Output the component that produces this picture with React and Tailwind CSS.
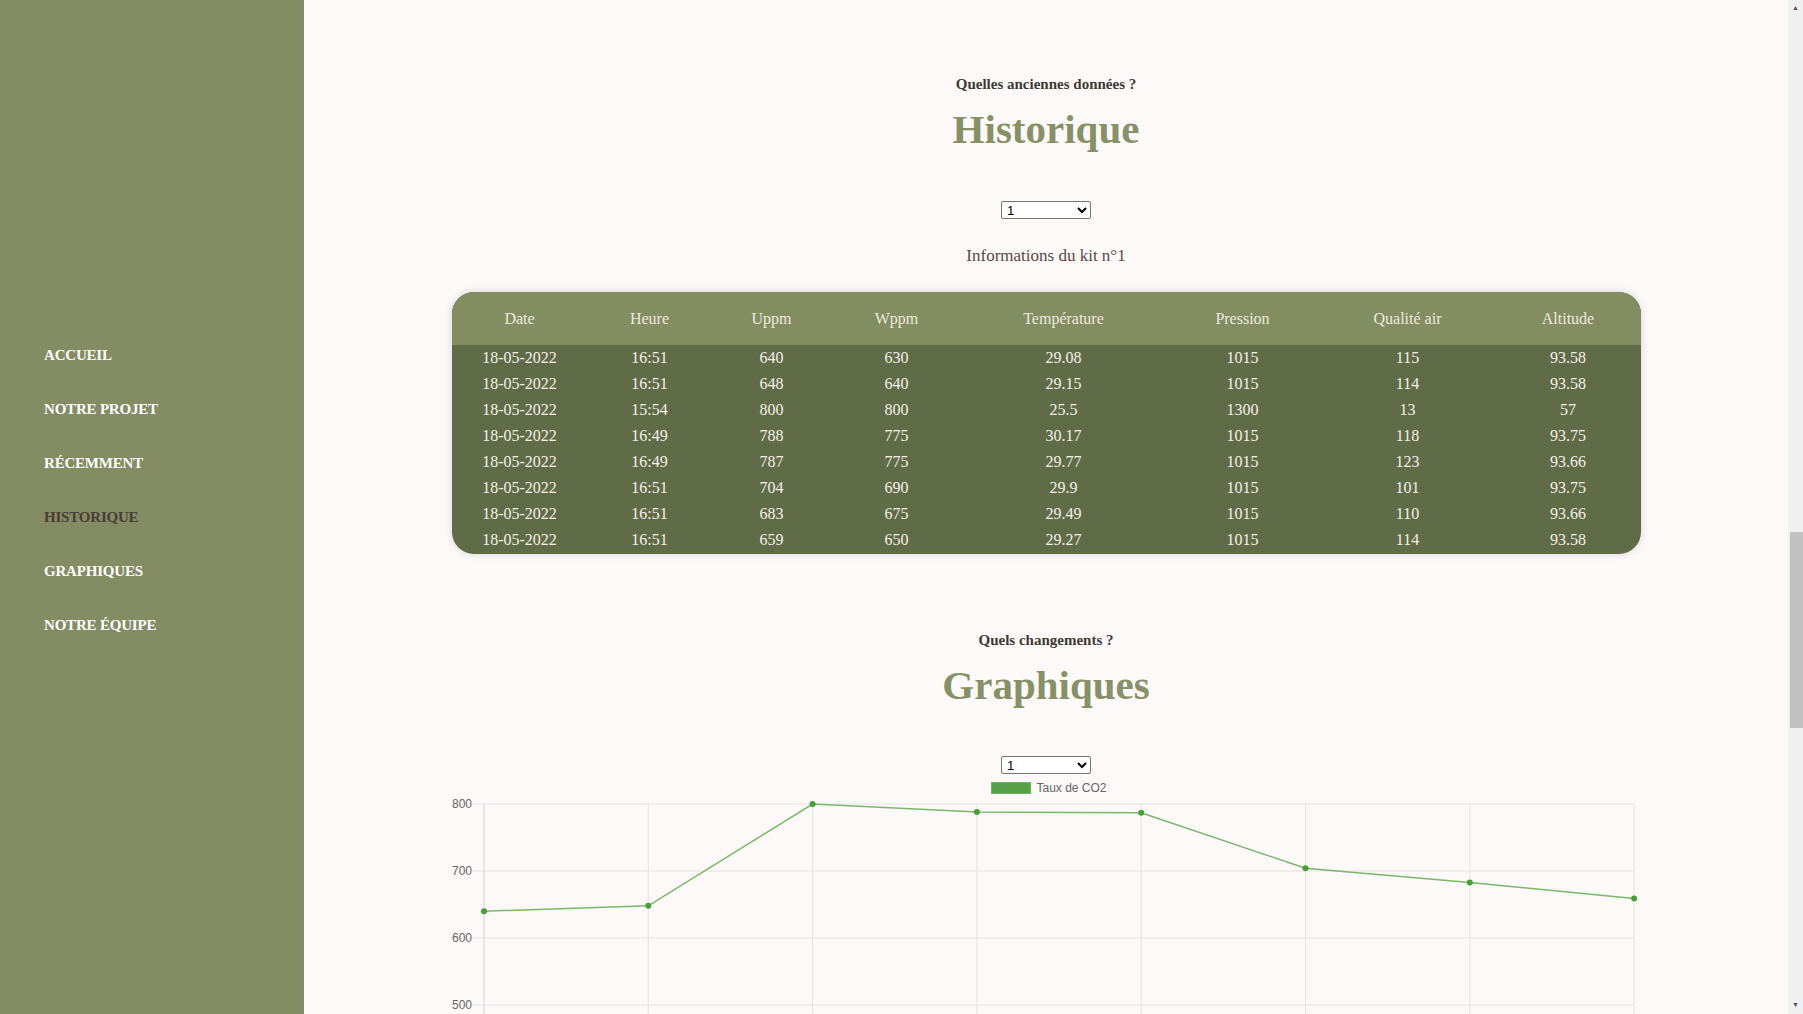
import React from "react";

const serif = { fontFamily: '"Liberation Serif", "DejaVu Serif", serif' };

const nav = ["ACCUEIL", "NOTRE PROJET", "RÉCEMMENT", "HISTORIQUE", "GRAPHIQUES", "NOTRE ÉQUIPE"];

const rows = [
  ["18-05-2022", "16:51", "640", "630", "29.08", "1015", "115", "93.58"],
  ["18-05-2022", "16:51", "648", "640", "29.15", "1015", "114", "93.58"],
  ["18-05-2022", "15:54", "800", "800", "25.5", "1300", "13", "57"],
  ["18-05-2022", "16:49", "788", "775", "30.17", "1015", "118", "93.75"],
  ["18-05-2022", "16:49", "787", "775", "29.77", "1015", "123", "93.66"],
  ["18-05-2022", "16:51", "704", "690", "29.9", "1015", "101", "93.75"],
  ["18-05-2022", "16:51", "683", "675", "29.49", "1015", "110", "93.66"],
  ["18-05-2022", "16:51", "659", "650", "29.27", "1015", "114", "93.58"],
];

const heads = ["Date", "Heure", "Uppm", "Wppm", "Température", "Pression", "Qualité air", "Altitude"];
const cols = "grid grid-cols-[136px_124px_120px_130px_204px_154px_176px_145px]";

const co2 = [640, 648, 800, 788, 787, 704, 683, 659];

function Chart() {
  const x = (i) => 32 + i * 164.3;
  const y = (v) => 9 + (800 - v) * 0.67;
  const pts = co2.map((v, i) => `${x(i)},${y(v)}`).join(" ");
  return (
    <svg width="1189" height="230" className="block">
      {[800, 700, 600, 500].map((v) => (
        <g key={v}>
          <line x1="20" x2="1182" y1={y(v)} y2={y(v)} stroke="#e6e2e1" strokeWidth="1" />
          <text x="20" y={y(v) + 4} textAnchor="end" fontSize="12" fill="#666" fontFamily="Liberation Sans, Arial, sans-serif">
            {v}
          </text>
        </g>
      ))}
      {co2.map((_, i) => (
        <line key={i} x1={x(i)} x2={x(i)} y1="9" y2="230" stroke={i === 0 ? "#d6d2d1" : "#e6e2e1"} strokeWidth="1" />
      ))}
      <polyline points={pts} fill="none" stroke="#79b86a" strokeWidth="1.5" />
      {co2.map((v, i) => (
        <circle key={i} cx={x(i)} cy={y(v)} r="3" fill="#45a035" />
      ))}
    </svg>
  );
}

function Select() {
  return (
    <div className="flex h-[18px]">
      <select
        className="w-[90px] h-[18px] border border-[#767676] rounded-[2px] bg-white text-[13px] text-black pl-[1px] leading-none"
        style={{ fontFamily: '"Liberation Sans", Arial, sans-serif' }}
        defaultValue="1"
      >
        <option value="1">1</option>
        <option value="2">2</option>
      </select>
    </div>
  );
}

export default function App() {
  return (
    <div className="flex h-[1014px] w-full overflow-hidden bg-[#fdf9f8]" style={serif}>
      {/* sidebar */}
      <aside className="w-[304px] shrink-0 bg-[#838c62]">
        <nav className="flex flex-col gap-[36px] pt-[346px] pl-[44px]">
          {nav.map((n) => (
            <a
              key={n}
              className={`text-[15px] leading-[18px] font-bold tracking-[-0.2px] ${n === "HISTORIQUE" ? "text-[#4b3d39]" : "text-white"}`}
            >
              {n}
            </a>
          ))}
        </nav>
      </aside>

      {/* main */}
      <main className="flex-1 h-full overflow-hidden">
        <div className="flex flex-col items-center pt-[74px]">
          <p className="text-[15px] leading-[20px] font-bold text-[#3e3934]">Quelles anciennes données ?</p>
          <h1 className="mt-[11px] text-[41px] leading-[48px] font-bold text-[#879167]">Historique</h1>
          <div className="mt-[48px]">
            <Select />
          </div>
          <p className="mt-[27px] text-[17px] leading-[20px] text-[#5a4845]">Informations du kit n°1</p>

          <div className="mt-[26px] w-[1189px] shrink-0 rounded-[22px] overflow-hidden bg-[#606b48] shadow-[0_0_8px_rgba(0,0,0,0.15)]">
            <div className={`${cols} h-[53px] items-center bg-[#838d62] text-[16px] text-[#ece9dc]`}>
              {heads.map((h) => (
                <div key={h} className="text-center">{h}</div>
              ))}
            </div>
            <div className="pb-[1px]">
              {rows.map((r, i) => (
                <div key={i} className={`${cols} h-[26px] items-center text-[16px] text-[#f4f0e6]`}>
                  {r.map((c, j) => (
                    <div key={j} className="text-center">{c}</div>
                  ))}
                </div>
              ))}
            </div>
          </div>

          <p className="mt-[76px] text-[15px] leading-[20px] font-bold text-[#3e3934]">Quels changements ?</p>
          <h1 className="mt-[11px] text-[41px] leading-[48px] font-bold text-[#879167]">Graphiques</h1>
          <div className="mt-[47px]">
            <Select />
          </div>
          <div
            className="mt-[7px] ml-[6px] flex items-center gap-[5px] text-[12px] leading-[14px] text-[#666]"
            style={{ fontFamily: '"Liberation Sans", Arial, sans-serif' }}
          >
            <span className="w-[40px] h-[12px] bg-[#56a047] border border-[#6fb45f]" />
            <span>Taux de CO2</span>
          </div>
          <div className="shrink-0">
            <Chart />
          </div>
        </div>
      </main>

      {/* scrollbar */}
      <div className="w-[15px] shrink-0 bg-[#f0f0f0] flex flex-col items-center">
        <div className="h-[17px] flex items-center justify-center text-[7px] text-[#505050] leading-none">▲</div>
        <div className="flex-1 w-full relative">
          <div className="absolute left-[2px] right-0 top-[515px] h-[196px] bg-[#c1c1c1]" />
        </div>
        <div className="h-[17px] flex items-center justify-center text-[7px] text-[#505050] leading-none">▼</div>
      </div>
    </div>
  );
}
